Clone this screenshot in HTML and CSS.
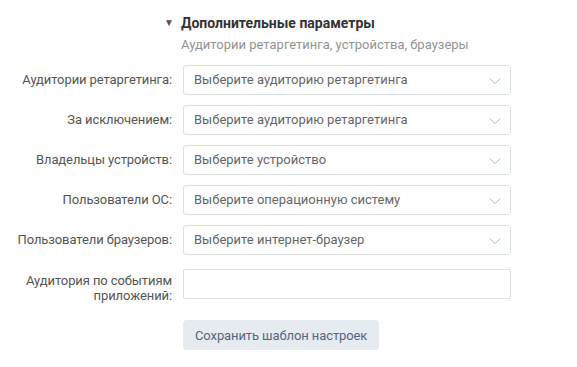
FILE: index.html
```html
<!DOCTYPE html>
<html lang="ru">
<head>
    <meta charset="UTF-8">
    <title>Дополнительные параметры</title>
    <link rel="stylesheet" href="styles.css">
</head>
<body>
    <div class="section">
        <div class="section-head">
            <span class="toggle">&#9660;</span>
            <div>
                <div class="section-title">Дополнительные параметры</div>
                <div class="section-sub">Аудитории ретаргетинга, устройства, браузеры</div>
            </div>
        </div>

        <div class="form">
            <label class="row-label">Аудитории ретаргетинга:</label>
            <div class="select">Выберите аудиторию ретаргетинга<svg class="chevron" width="12" height="7" viewBox="0 0 12 7"><path d="M0.5 0.5 L6 5.5 L11.5 0.5" fill="none" stroke="#b5bcc6" stroke-width="1"/></svg></div>

            <label class="row-label">За исключением:</label>
            <div class="select">Выберите аудиторию ретаргетинга<svg class="chevron" width="12" height="7" viewBox="0 0 12 7"><path d="M0.5 0.5 L6 5.5 L11.5 0.5" fill="none" stroke="#b5bcc6" stroke-width="1"/></svg></div>

            <label class="row-label">Владельцы устройств:</label>
            <div class="select">Выберите устройство<svg class="chevron" width="12" height="7" viewBox="0 0 12 7"><path d="M0.5 0.5 L6 5.5 L11.5 0.5" fill="none" stroke="#b5bcc6" stroke-width="1"/></svg></div>

            <label class="row-label">Пользователи ОС:</label>
            <div class="select">Выберите операционную систему<svg class="chevron" width="12" height="7" viewBox="0 0 12 7"><path d="M0.5 0.5 L6 5.5 L11.5 0.5" fill="none" stroke="#b5bcc6" stroke-width="1"/></svg></div>

            <label class="row-label">Пользователи браузеров:</label>
            <div class="select">Выберите интернет-браузер<svg class="chevron" width="12" height="7" viewBox="0 0 12 7"><path d="M0.5 0.5 L6 5.5 L11.5 0.5" fill="none" stroke="#b5bcc6" stroke-width="1"/></svg></div>

            <label class="row-label two-lines">Аудитория по событиям приложений:</label>
            <input type="text" class="text-input">

            <div></div>
            <div><button class="btn">Сохранить шаблон настроек</button></div>
        </div>
    </div>
</body>
</html>
```
FILE: styles.css
```css
body {
    margin: 0;
    background: #fff;
    font-family: Roboto, "Noto Sans", Arial, sans-serif;
    font-size: 13px;
    color: #555;
}
.section {
    padding: 14px 0 0 8px;
}
.section-head {
    display: flex;
    padding-left: 156px;
}
.toggle {
    font-size: 10px;
    color: #555;
    width: 17px;
    line-height: 18px;
}
.section-title {
    font-size: 14px;
    font-weight: bold;
    color: #333;
    line-height: 18px;
}
.section-sub {
    margin-top: 5px;
    color: #939393;
    line-height: 16px;
}
.form {
    display: grid;
    grid-template-columns: 164px 328px;
    column-gap: 11px;
    row-gap: 10px;
    margin-top: 12px;
}
.row-label {
    text-align: right;
    line-height: 30px;
    color: #555;
    letter-spacing: -0.1px;
}
.row-label.two-lines {
    line-height: 15px;
    margin-top: 8px;
}
.select {
    position: relative;
    height: 30px;
    box-sizing: border-box;
    border: 1px solid #dce1e6;
    border-radius: 3px;
    padding: 0 10px;
    line-height: 28px;
    color: #666;
}
.chevron {
    position: absolute;
    right: 9px;
    top: 12px;
}
.text-input {
    height: 30px;
    box-sizing: border-box;
    width: 100%;
    border: 1px solid #dce1e6;
    border-radius: 2px;
    margin-top: 4px;
    margin-bottom: 11px;
}
.btn {
    background: #e5ebf1;
    color: #55677d;
    border: none;
    border-radius: 4px;
    height: 30px;
    padding: 0 12px;
    font-family: inherit;
    font-size: 13px;
    letter-spacing: -0.1px;
    cursor: pointer;
}
```
